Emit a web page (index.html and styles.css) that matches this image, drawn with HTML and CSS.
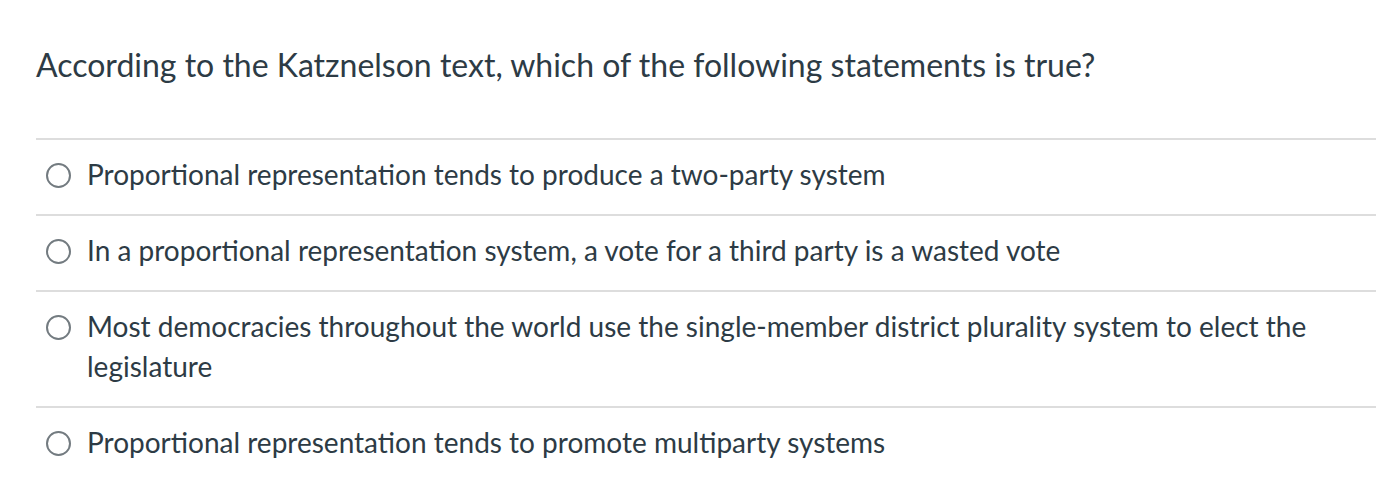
FILE: index.html
```html
<!DOCTYPE html>
<html>
<head>
<meta charset="utf-8">
<link rel="stylesheet" href="styles.css">
</head>
<body>
<div class="quiz">
  <div class="question">According to the Katznelson text, which of the following statements is true?</div>
  <div class="answers">
    <label class="answer"><span class="radio"></span><span class="text">Proportional representation tends to produce a two-party system</span></label>
    <label class="answer"><span class="radio"></span><span class="text">In a proportional representation system, a vote for a third party is a wasted vote</span></label>
    <label class="answer"><span class="radio"></span><span class="text">Most democracies throughout the world use the single-member district plurality system to elect the legislature</span></label>
    <label class="answer"><span class="radio"></span><span class="text">Proportional representation tends to promote multiparty systems</span></label>
  </div>
</div>
</body>
</html>
```

FILE: styles.css
```css
html, body {
  margin: 0;
  padding: 0;
  background: #ffffff;
}
body {
  font-family: Lato, "Noto Sans", sans-serif;
  color: #2d3b45;
}
.quiz {
  padding: 41px 10px 0 36px;
}
.question {
  font-size: 32px;
  line-height: 48px;
  margin-bottom: 49px;
}
.answers {
  display: flex;
  flex-direction: column;
}
.answer {
  display: flex;
  align-items: flex-start;
  border-top: 2px solid #dddddd;
  padding: 14px 0 20px 10px;
  font-size: 28px;
  line-height: 40px;
}
.radio {
  flex: none;
  width: 21px;
  height: 21px;
  border: 2px solid #737b80;
  border-radius: 50%;
  margin-top: 9px;
  margin-right: 16px;
  box-sizing: content-box;
}
.text {
  flex: 1;
  padding-right: 60px;
}
```
